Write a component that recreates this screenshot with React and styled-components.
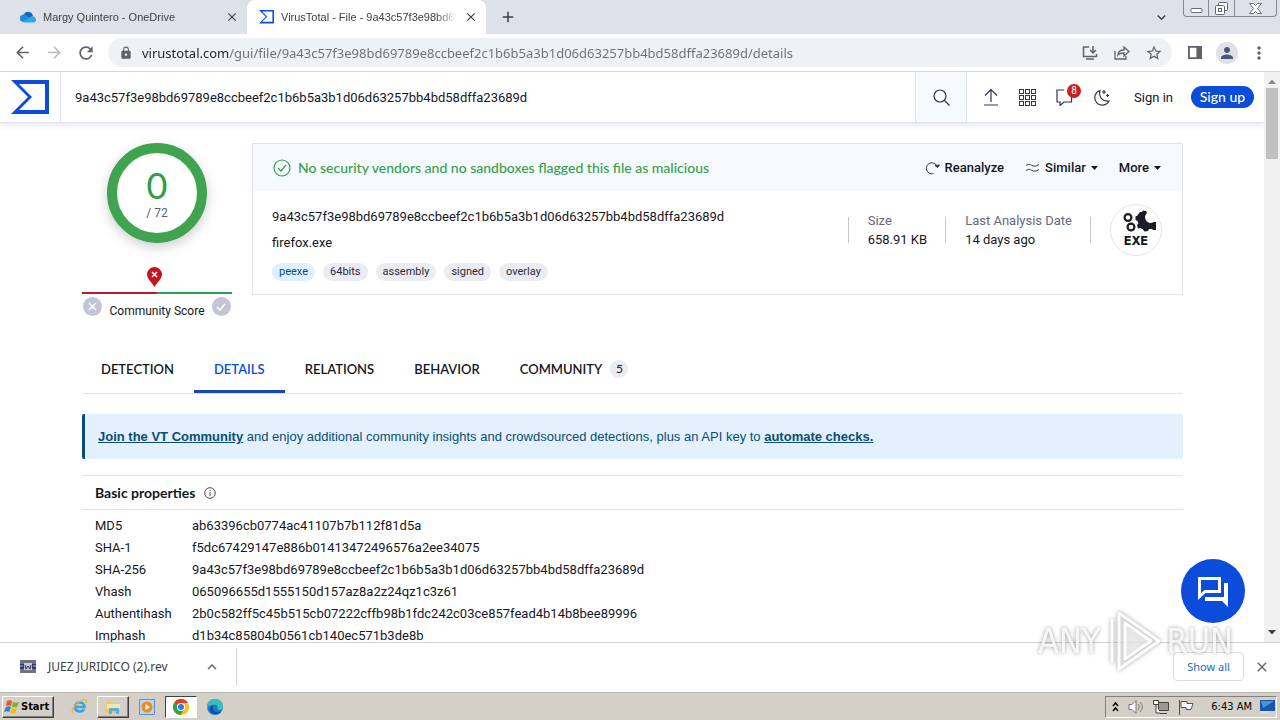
import styled, { createGlobalStyle, css } from "styled-components";
import { MdLock, MdStarOutline, MdPerson, MdMoreVert, MdRefresh, MdArrowBack, MdArrowForward, MdAdd, MdClose, MdExpandMore, MdExpandLess } from "react-icons/md";

const GlobalStyle = createGlobalStyle`
* { box-sizing: border-box; }
body {
margin: 0;
font-family: Roboto, "Liberation Sans", sans-serif;
font-size: 13px;
color: #15171f;
background: #fff;
}
button, input {
font: inherit;
color: inherit;
border: 0;
padding: 0;
margin: 0;
background: none;
}
button { cursor: pointer; }
svg { display: block; flex: none; }
`

const Desktop = styled.div`
display: flex;
flex-direction: column;
height: 100vh;
overflow: hidden;
`

/* browser window */
const TabStrip = styled.div`
display: flex;
flex: none;
height: 34px;
padding-left: 8px;
background: #dee1e9;
font-family: "Liberation Sans", sans-serif;
font-size: 11px;
color: #3c4043;
`
const Tab = styled.div`
display: flex;
align-items: center;
gap: 7px;
width: 239px;
padding: 0 8px 0 12px;
border-radius: 8px 8px 0 0;
background: ${props => props.$active ? "#fff" : "transparent"};
`
const TabTitle = styled.span`
flex: 1;
overflow: hidden;
white-space: nowrap;
mask-image: linear-gradient(to right, #000 88%, transparent);
`
const IconButton = styled.button`
display: flex;
align-items: center;
justify-content: center;
width: ${props => props.$w || 20}px;
color: ${props => props.$color || "#5f6368"};
`
const Spacer = styled.div`
flex: 1;
`
const WindowButtons = styled.div`
display: flex;
width: 94px;
height: 17px;
margin: 0 3px 0 12px;
border: 1px solid #85888f;
border-top: 0;
border-radius: 0 0 4px 4px;
`
const WindowButton = styled.button`
display: flex;
align-items: center;
justify-content: center;
flex: ${props => props.$grow || 1};
& + & { border-left: 1px solid #85888f; }
`
const Toolbar = styled.div`
display: flex;
align-items: center;
flex: none;
height: 38px;
padding: 0 10px 0 6px;
border-bottom: 1px solid #d5d7da;
`
const Address = styled.div`
display: flex;
align-items: center;
flex: 1;
height: 29px;
margin: 0 12px 0 6px;
padding: 0 2px 0 11px;
border-radius: 15px;
background: #eff2f5;
`
const AddressInput = styled.input`
flex: 1;
min-width: 0;
margin-left: 9px;
font-family: "Noto Sans", sans-serif;
font-size: 13px;
outline: 0;
color: transparent;
background: linear-gradient(to right, #202124 87px, #6b6f74 87px);
background-clip: text;
`
const Avatar = styled.button`
display: flex;
align-items: center;
justify-content: center;
width: 22px;
height: 22px;
margin: 0 10px;
border-radius: 50%;
background: #dfe1e5;
color: #4a5878;
`

/* page */
const Viewport = styled.div`
display: flex;
flex: 1;
min-height: 0;
`
const Page = styled.div`
flex: 1;
min-width: 0;
overflow: hidden;
`
const ScrollTrack = styled.div`
display: flex;
flex-direction: column;
align-items: center;
width: 16px;
padding: 7px 0;
background: #f1f1f1;
`
const ScrollThumb = styled.div`
flex: none;
width: 12px;
height: 71px;
margin-top: 4px;
background: #c1c1c1;
`
const Header = styled.header`
display: flex;
align-items: center;
height: 51px;
padding-right: 10px;
border-bottom: 1px solid #e3e5ec;
box-shadow: 0 2px 6px rgba(30, 40, 80, .12);
`
const Logo = styled.a`
display: flex;
align-items: center;
height: 50px;
width: 61px;
padding-left: 11px;
border-right: 1px solid #dfe3ee;
`
const SearchInput = styled.input`
flex: 1;
min-width: 0;
height: 50px;
padding-left: 14px;
outline: 0;
`
const SearchButton = styled.button`
display: flex;
align-items: center;
justify-content: center;
width: 52px;
height: 50px;
margin-right: 5px;
border: solid #dfe3ee;
border-width: 0 1px;
background: #f7faff;
`
const NavButton = styled.button`
display: flex;
align-items: center;
justify-content: center;
position: relative;
width: 37px;
height: 36px;
`
const Count = styled.span`
position: absolute;
top: 5px;
right: 2px;
width: 14px;
height: 14px;
border-radius: 50%;
background: #c8201f;
color: #fff;
font-size: 10px;
line-height: 14px;
text-align: center;
`
const SignIn = styled.a`
margin: 0 18px 0 14px;
color: inherit;
text-decoration: none;
`
const SignUp = styled.a`
width: 63px;
height: 22px;
border-radius: 11px;
background: #0b4dda;
color: #fff;
font-family: Lato, sans-serif;
font-size: 14px;
font-weight: 500;
line-height: 22px;
text-align: center;
text-decoration: none;
`
const Content = styled.main`
padding: 20px 81px 0 82px;
`
const Summary = styled.section`
display: flex;
gap: 20px;
`
const Score = styled.div`
display: flex;
flex-direction: column;
align-items: center;
width: 150px;
`
const Ring = styled.div`
display: flex;
flex-direction: column;
align-items: center;
width: 100px;
height: 100px;
padding-top: 12px;
border: 10px solid #3fa350;
border-radius: 50%;
box-shadow: 0 4px 12px rgba(60, 60, 80, .25), inset 0 1px 3px rgba(60, 60, 80, .1);
color: #5a5d75;
font-size: 12px;
line-height: 16px;
`
const Detected = styled.span`
color: #2f9e44;
font-family: Lato, sans-serif;
font-size: 36px;
line-height: 40px;
`
const Pin = styled.div`
margin: 24px 6px 4px 0;
`
const ScoreBar = styled.div`
width: 100%;
height: 2px;
background: linear-gradient(to right, #b91c2c 50%, #2fa052 50%);
`
const Votes = styled.div`
display: flex;
justify-content: space-between;
width: 100%;
padding: 3px 1px 0 1px;
font-size: 12px;
line-height: 28px;
`
const Vote = styled.button`
display: flex;
align-items: center;
justify-content: center;
width: 19px;
height: 19px;
border-radius: 50%;
background: #c3c4d4;
color: #fff;
`
const Card = styled.div`
flex: 1;
height: 152px;
border: 1px solid #e0e3e8;
`
const CardHeader = styled.div`
display: flex;
align-items: center;
height: 47px;
padding: 0 21px 0 20px;
background: #f6faff;
`
const Verdict = styled.div`
display: flex;
flex: 1;
align-items: center;
gap: 7px;
color: #34a04c;
font-family: Lato, sans-serif;
font-size: 14px;
font-weight: 500;
`
const CardAction = styled.button`
display: flex;
align-items: center;
gap: 5px;
margin-left: 21px;
font-weight: 500;
`
const CardBody = styled.div`
display: flex;
padding: 13px 20px 0 19px;
`
const FileInfo = styled.div`
flex: 1;
line-height: 26px;
`
const Tags = styled.div`
display: flex;
gap: 8px;
margin-top: 7px;
`
const Tag = styled.a`
height: 18px;
padding: 0 7px;
border-radius: 9px;
background: ${props => props.$blue ? "#def1ff" : "#ebebf2"};
color: ${props => props.$blue ? "#0b4d75" : "#2b2c3d"};
font-size: 11px;
line-height: 17px;
text-decoration: none;
`
const Fact = styled.div`
height: 26px;
margin-top: 13px;
padding: 0 18px 0 19px;
border-left: 1px solid #c4c7ce;
line-height: 19px;
white-space: nowrap;
`
const FactEnd = styled.div`
width: 20px;
height: 26px;
margin-top: 13px;
border-left: 1px solid #c4c7ce;
`
const FactLabel = styled.div`
margin-top: -6px;
color: #63687f;
`
const FileType = styled.div`
display: flex;
flex-direction: column;
align-items: center;
width: 52px;
height: 52px;
padding-top: 5px;
border: 1px solid #e4e4ee;
border-radius: 50%;
font-family: Inter, sans-serif;
font-size: 12px;
font-weight: 800;
line-height: 14px;
`
const Tabs = styled.nav`
display: flex;
height: 46px;
margin-top: 23px;
border-bottom: 1px solid #e0e3e8;
font-family: Lato, sans-serif;
`
const NavTab = styled.a`
display: flex;
align-items: center;
gap: 8px;
height: 45px;
padding: 0 20px;
border-bottom: 3px solid transparent;
color: inherit;
font-weight: 600;
text-decoration: none;
&:first-child { padding-left: 19px; }
${props => props.$active && css`
color: #0b4dda;
border-bottom-color: #1845c4;
`}
`
const TabCount = styled.span`
width: 18px;
height: 18px;
border-radius: 50%;
background: #ebebf2;
font-size: 12px;
font-weight: 400;
line-height: 18px;
text-align: center;
`
const Banner = styled.p`
margin: 20px 0 16px;
padding: 0 13px;
border-left: 3px solid #0b4d75;
border-radius: 2px;
background: #e2f1fd;
color: #0b4d75;
font-family: "Liberation Sans", sans-serif;
line-height: 45px;
a {
color: inherit;
font-weight: 700;
}
`
const SectionTitle = styled.h2`
display: flex;
align-items: center;
gap: 9px;
height: 35px;
margin: 0 0 5px;
padding-left: 13px;
border: solid #e2e4e8;
border-width: 1px 0;
font-family: Lato, sans-serif;
font-size: 14px;
font-weight: 700;
`
const Properties = styled.table`
border-collapse: collapse;
line-height: 22px;
th {
width: 110px;
padding: 0 0 0 13px;
font-weight: 400;
text-align: left;
}
td { padding: 0; }
`
const ChatButton = styled.button`
position: fixed;
right: 35px;
bottom: 97px;
display: flex;
align-items: center;
justify-content: center;
width: 64px;
height: 64px;
border-radius: 50%;
background: #0b4dda;
color: #fff;
`
const Watermark = styled.div`
position: fixed;
right: 47px;
bottom: 48px;
display: flex;
align-items: center;
gap: 5px;
color: rgba(255, 255, 255, .85);
font-family: "DejaVu Sans Condensed", "DejaVu Sans", sans-serif;
font-size: 34px;
text-shadow: 0 0 4px rgba(90, 90, 90, .6);
pointer-events: none;
svg { filter: drop-shadow(0 0 2px rgba(90, 90, 90, .6)); }
`

/* downloads and taskbar */
const Downloads = styled.div`
display: flex;
align-items: center;
flex: none;
height: 50px;
padding: 0 8px 2px 20px;
border-top: 1px solid #cfd1d4;
background: #fff;
color: #3c4043;
font-family: "Noto Sans", sans-serif;
font-size: 12px;
`
const Download = styled.div`
display: flex;
align-items: center;
width: 217px;
height: 38px;
border-right: 1px solid #d0d2d6;
`
const FileName = styled.span`
flex: 1;
margin-left: 12px;
`
const ShowAll = styled.button`
width: 71px;
height: 29px;
margin-right: 8px;
border: 1px solid #dadce0;
border-radius: 4px;
color: #1a67d2;
font-size: 11px;
`
const Taskbar = styled.div`
display: flex;
align-items: center;
flex: none;
height: 28px;
padding: 0 3px 0 2px;
border-top: 1px solid #b9b6af;
background: #d4d0c8;
color: #000;
font-family: "DejaVu Sans Condensed", "DejaVu Sans", sans-serif;
font-size: 11px;
`
const StartButton = styled.button`
display: flex;
align-items: center;
gap: 1px;
width: 52px;
height: 22px;
margin-right: 9px;
padding-left: 1px;
border: 1px solid;
border-color: #fff #404040 #404040 #fff;
box-shadow: inset -1px -1px #808080;
font-weight: 700;
`
const TaskButton = styled.button`
display: flex;
align-items: center;
justify-content: center;
width: 32px;
height: 22px;
margin-right: 2px;
border: 1px solid transparent;
${props => props.$open && css`
border-color: #fff #404040 #404040 #fff;
box-shadow: inset -1px -1px #808080;
`}
${props => props.$pressed && css`
background: #fff;
border-color: #404040 #fff #fff #404040;
`}
`
const Tray = styled.div`
display: flex;
align-items: center;
gap: 8px;
width: 172px;
height: 22px;
padding: 0 1px 0 5px;
border: 1px solid;
border-color: #808080 #fff #fff #808080;
`
const Clock = styled.time`
flex: 1;
text-align: right;
white-space: nowrap;
`

const VtMark = ({ size }) => (
    <svg width={size} height={size * 34 / 38} viewBox="0 0 38 34" fill="#0b4dda">
        <path fillRule="evenodd" d="M0 0h38v34H0l17-17zM8 4l13 13L8 30h26V4z" />
    </svg>
)

const Cloud = () => (
    <svg width="16" height="12" viewBox="0 0 16 12">
        <path d="M4 3a5 5 0 0 1 9 2L8 9 2 8z" fill="#1467b8" />
        <path d="M1 10a3.500 3.500 0 0 1 1-6c2-1 4 0 5 1l6 5-2 1H3z" fill="#1c8edb" />
        <path d="M3 11 10 6c3-2 6 0 6 3 0 2-2 2.500-3 2.500H4z" fill="#2ca9ea" />
    </svg>
)

const Caret = () => (
    <svg width="7" height="4" viewBox="0 0 7 4"><path d="M0 0h7L3.500 4z" fill="currentColor" /></svg>
)

const ScrollArrow = ({ down }) => (
    <svg width="8" height="5" viewBox="0 0 8 5"><path d={down ? "M0 0h8L4 4.500z" : "M0 5h8L4 .5z"} fill={down ? "#404040" : "#8a8a8a"} /></svg>
)

const properties = [
    ["MD5", "ab63396cb0774ac41107b7b112f81d5a"],
    ["SHA-1", "f5dc67429147e886b01413472496576a2ee34075"],
    ["SHA-256", "9a43c57f3e98bd69789e8ccbeef2c1b6b5a3b1d06d63257bb4bd58dffa23689d"],
    ["Vhash", "065096655d1555150d157az8a2z24qz1c3z61"],
    ["Authentihash", "2b0c582ff5c45b515cb07222cffb98b1fdc242c03ce857fead4b14b8bee89996"],
    ["Imphash", "d1b34c85804b0561cb140ec571b3de8b"],
]
const fileHash = properties[2][1];

const BrowserChrome = () => (
    <>
        <TabStrip>
            <Tab>
                <Cloud />
                <TabTitle>Margy Quintero - OneDrive</TabTitle>
                <IconButton $w={14} $color="#3c4043" aria-label="Close tab"><MdClose size={14} /></IconButton>
            </Tab>
            <Tab $active>
                <VtMark size={15} />
                <TabTitle>VirusTotal - File - 9a43c57f3e98bd69</TabTitle>
                <IconButton $w={14} $color="#3c4043" aria-label="Close tab"><MdClose size={14} /></IconButton>
            </Tab>
            <IconButton $w={44} $color="#3c4043" aria-label="New tab"><MdAdd size={18} /></IconButton>
            <Spacer />
            <IconButton $color="#3c4043" aria-label="Search tabs"><MdExpandMore size={17} /></IconButton>
            <WindowButtons>
                <WindowButton aria-label="Minimize">
                    <svg width="13" height="12" viewBox="0 0 13 12"><rect x="1" y="6.500" width="11" height="4" rx="1" fill="#fff" stroke="#6b6e75" /></svg>
                </WindowButton>
                <WindowButton aria-label="Restore">
                    <svg width="13" height="13" viewBox="0 0 13 13" fill="#fff" stroke="#5f6269"><rect x="3.500" y=".5" width="9" height="8" rx="1" /><rect x=".5" y="3.500" width="9" height="9" rx="1" /><rect x="3.500" y="6.500" width="3" height="3" /></svg>
                </WindowButton>
                <WindowButton $grow={1.700} aria-label="Close">
                    <svg width="13" height="11" viewBox="0 0 13 11"><path d="M.5.5h4l2 2 2-2h4L8.500 5.500l4 5h-4l-2-2-2 2h-4l4-5z" fill="#fff" stroke="#6b6e75" /></svg>
                </WindowButton>
            </WindowButtons>
        </TabStrip>
        <Toolbar>
            <IconButton $w={32} aria-label="Back"><MdArrowBack size={19} /></IconButton>
            <IconButton $w={32} $color="#babcbe" aria-label="Forward"><MdArrowForward size={19} /></IconButton>
            <IconButton $w={32} aria-label="Reload"><MdRefresh size={20} /></IconButton>
            <Address>
                <MdLock size={14} color="#5f6368" />
                <AddressInput aria-label="Address" defaultValue={`virustotal.com/gui/file/${fileHash}/details`} />
                <IconButton $w={32} aria-label="Install">
                    <svg width="16" height="14" viewBox="0 0 16 14" fill="none" stroke="currentColor" strokeWidth="1.500"><path d="M7 1H1.500v9.500h13V8M4 13h8M11 0v7M8 4l3 3 3-3" /></svg>
                </IconButton>
                <IconButton $w={32} aria-label="Share">
                    <svg width="16" height="14" viewBox="0 0 16 14" fill="none" stroke="currentColor" strokeWidth="1.300"><path d="M1 5v8h11v-3M4 9c0-4 3-5 6-5V1l5 4.500L10 10V7C7 7 5 7.500 4 9z" /></svg>
                </IconButton>
                <IconButton $w={32} aria-label="Bookmark"><MdStarOutline size={18} /></IconButton>
            </Address>
            <IconButton $w={22} aria-label="Side panel">
                <svg width="14" height="13" viewBox="0 0 15 14"><path d="M1 1h13v12H1z" fill="none" stroke="currentColor" strokeWidth="2" /><path d="M9 0h6v14H9z" fill="currentColor" /></svg>
            </IconButton>
            <Avatar aria-label="Profile"><MdPerson size={18} /></Avatar>
            <IconButton $w={22} aria-label="Menu"><MdMoreVert size={20} /></IconButton>
        </Toolbar>
    </>
)

const VtHeader = () => (
    <Header>
        <Logo href="#" aria-label="VirusTotal"><VtMark size={38} /></Logo>
        <SearchInput aria-label="Search" defaultValue={fileHash} />
        <SearchButton aria-label="Search">
            <svg width="17" height="17" viewBox="0 0 17 17" fill="none" stroke="#33364a" strokeWidth="1.200"><circle cx="7" cy="7" r="6" /><path d="m11.500 11.500 5 5" /></svg>
        </SearchButton>
        <NavButton aria-label="Upload">
            <svg width="16" height="18" viewBox="0 0 16 18" fill="none" stroke="#33364a" strokeWidth="1.200"><path d="M8 14V1.500M2 7.500l6-6 6 6M1 17h14" /></svg>
        </NavButton>
        <NavButton aria-label="Apps">
            <svg width="17" height="17" viewBox="0 0 17 17" fill="none" stroke="#33364a">
                {[0, 1, 2].map(r => [0, 1, 2].map(c => <rect key={`${r}${c}`} x={c * 6 + .5} y={r * 6 + .5} width="4" height="4" />))}
            </svg>
        </NavButton>
        <NavButton aria-label="Notifications">
            <svg width="17" height="17" viewBox="0 0 17 17" fill="none" stroke="#33364a" strokeWidth="1.200"><path d="M8 1H1v12h3v3.500L8 13h7.500V8" /></svg>
            <Count>8</Count>
        </NavButton>
        <NavButton aria-label="Dark mode">
            <svg width="17" height="17" viewBox="0 0 17 17" fill="none" stroke="#33364a" strokeWidth="1.200"><path d="M7 1.500A7.500 7.500 0 1 0 16 12C10 13 5 8 7 1.500z" /><path d="M11 1v4M9 3h4M14.500 5v3M13 6.500h3" /></svg>
        </NavButton>
        <SignIn href="#">Sign in</SignIn>
        <SignUp href="#">Sign up</SignUp>
    </Header>
)

const FileSummary = () => (
    <Summary>
        <Score>
            <Ring><Detected>0</Detected>/ 72</Ring>
            <Pin>
                <svg width="15" height="21" viewBox="0 0 15 21"><path d="M7.500 0a7.500 7.500 0 0 1 7.500 7.500c0 4-4 7-7.500 12.500C4 14.500 0 11.500 0 7.500A7.500 7.500 0 0 1 7.500 0z" fill="#c4161c" /><path d="m5 5 5 5m0-5-5 5" stroke="#fff" strokeWidth="1.500" /></svg>
            </Pin>
            <ScoreBar />
            <Votes>
                <Vote aria-label="Vote malicious"><svg width="9" height="9" viewBox="0 0 9 9" stroke="#fff" strokeWidth="1.500"><path d="m1 1 7 7m0-7L1 8" /></svg></Vote>
                Community Score
                <Vote aria-label="Vote harmless"><svg width="10" height="8" viewBox="0 0 10 8" fill="none" stroke="#fff" strokeWidth="1.500"><path d="m1 4 3 3 5-6" /></svg></Vote>
            </Votes>
        </Score>
        <Card>
            <CardHeader>
                <Verdict>
                    <svg width="18" height="18" viewBox="0 0 18 18" fill="none" stroke="currentColor" strokeWidth="1.200"><circle cx="9" cy="9" r="8" /><path d="m5 9 3 3 5-6" /></svg>
                    No security vendors and no sandboxes flagged this file as malicious
                </Verdict>
                <CardAction>
                    <svg width="15" height="14" viewBox="0 0 15 14" fill="none" stroke="#33364a"><path d="M8.500 12.500a5.500 5.500 0 1 1 3.500-7" /><path d="m10 4.500 2.500 2L14.500 4z" fill="#33364a" /></svg>
                    Reanalyze
                </CardAction>
                <CardAction>
                    <svg width="15" height="9" viewBox="0 0 15 9" fill="none" stroke="#33364a"><path d="M1 2.500c3-2 4-1 6 0s4 1 7-1M1 7.500c3-2 4-1 6 0s4 1 7-1" /></svg>
                    Similar <Caret />
                </CardAction>
                <CardAction>More <Caret /></CardAction>
            </CardHeader>
            <CardBody>
                <FileInfo>
                    <div>{fileHash}</div>
                    <div>firefox.exe</div>
                    <Tags>
                        <Tag href="#" $blue>peexe</Tag>
                        <Tag href="#">64bits</Tag>
                        <Tag href="#">assembly</Tag>
                        <Tag href="#">signed</Tag>
                        <Tag href="#">overlay</Tag>
                    </Tags>
                </FileInfo>
                <Fact><FactLabel>Size</FactLabel>658.91 KB</Fact>
                <Fact><FactLabel>Last Analysis Date</FactLabel>14 days ago</Fact>
                <FactEnd />
                <FileType>
                    <svg width="40" height="24" viewBox="-4 0 40 24">
                        <g fill="none" stroke="#1b1c26" strokeWidth="2.200"><circle cx="8" cy="7.500" r="3.400" /><circle cx="11" cy="17" r="3.400" /></g>
                        <path d="M20 2l2 0 1-1.500 3 .5 1 2c-2.500 2.500-2.500 6 0 8.500 2.500 2 4.500 2 6.500.500h2.500v8h-3l-1-1-3 0-1 2-3.500.500-1.500-2-2.500-1.500-2.500.500-1-3.500 1.500-1.500-1-2.500-2-1 0-3.500 2-1 .5-1z" fill="#1b1c26" />
                    </svg>
                    EXE
                </FileType>
            </CardBody>
        </Card>
    </Summary>
)

const DownloadBar = () => (
    <Downloads>
        <Download>
            <svg width="16" height="15" viewBox="0 0 16 15"><path d="M0 1h16v4H0z" fill="#6d7185" /><path d="M0 5h16v5H0z" fill="#2f3b78" /><path d="M0 10h16v4H0z" fill="#75776f" /><path d="M4 4h8v7H4z" fill="#c9cbd2" /><path d="m5 6 1 4 2-3 2 3 1-4" fill="none" stroke="#222b52" /><path d="M0 7h3M13 7h3" stroke="#aeb6d8" /></svg>
            <FileName>JUEZ JURIDICO (2).rev</FileName>
            <IconButton $w={48} aria-label="Options"><MdExpandLess size={18} /></IconButton>
        </Download>
        <Spacer />
        <ShowAll>Show all</ShowAll>
        <IconButton aria-label="Close"><MdClose size={16} /></IconButton>
    </Downloads>
)

const WindowsTaskbar = () => (
    <Taskbar>
        <StartButton>
            <svg width="16" height="16" viewBox="0 0 16 16"><path d="M3 2c2-1 4-1 5 0L7 7c-2-1-3-1-5 0z" fill="#e8562a" /><path d="M9 3c2 1 4 1 6 0l-2 5c-2 1-3 0-5 0z" fill="#7bb32e" /><path d="M2 8c2-1 3-1 5 0l-2 5c-1-1-3-1-5 0z" fill="#2f7fd6" /><path d="M8 9c2 1 3 1 5 0l-2 5c-2 1-4 1-5 0z" fill="#f6b71b" /></svg>
            Start
        </StartButton>
        <TaskButton aria-label="Internet Explorer">
            <svg width="17" height="17" viewBox="0 0 17 17" fill="none"><path d="M4 9h9.500c0-6-9.500-6-9.500 0 0 5 7 6 9 2" stroke="#34a3e0" strokeWidth="2.600" /><path d="M2 15c-3-3 4-11 10-13 4-1 4 1 3 3" stroke="#e9b43a" strokeWidth="1.200" /></svg>
        </TaskButton>
        <TaskButton $open aria-label="Explorer">
            <svg width="17" height="16" viewBox="0 0 17 16"><path d="M1 2h6l1 2h7v10H1z" fill="#eacb6b" /><path d="M2 5h13v5H2z" fill="#f7e8a8" /><path d="M4 15V9h10v6h-3v-3H7v3z" fill="#58aee0" /></svg>
        </TaskButton>
        <TaskButton aria-label="Media Player">
            <svg width="16" height="16" viewBox="0 0 16 16"><path d="M.5.500h15v15H.5z" fill="#b9d4ec" stroke="#5d92c4" /><circle cx="8" cy="8" r="5.500" fill="#f08a1c" /><path d="m6.500 5 4.500 3-4.500 3z" fill="#fff" /></svg>
        </TaskButton>
        <TaskButton $pressed aria-label="Chrome">
            <svg width="16" height="16" viewBox="0 0 16 16"><circle cx="8" cy="8" r="8" fill="#fbc116" /><path d="M8 8 1 4a8 8 0 0 1 14 0H8z" fill="#e33b2e" /><path d="M8 8 1 4a8 8 0 0 0 6.500 12L11 10z" fill="#2da24c" /><circle cx="8" cy="8" r="4" fill="#fff" /><circle cx="8" cy="8" r="3" fill="#3279e8" /></svg>
        </TaskButton>
        <TaskButton aria-label="Edge">
            <svg width="16" height="16" viewBox="0 0 16 16"><circle cx="8" cy="8" r="8" fill="#1479c9" /><path d="M0 8a8 8 0 0 1 16 0c0 3-4 4-6 2 2-3-1-5-4-4-3 0-5 1-6 3z" fill="#36c0b8" /><path d="M6 8c-1 4 3 6 8 5-4 4-11 2-11-3 0-2 1-3 3-4z" fill="#0c4f9e" /></svg>
        </TaskButton>
        <Spacer />
        <Tray>
            <svg width="9" height="12" viewBox="0 0 9 12" fill="none" stroke="#000" strokeWidth="1.500"><path d="m2 5 2.500-3L7 5M2 10l2.500-3L7 10" /></svg>
            <svg width="17" height="16" viewBox="0 0 17 16" fill="none" stroke="#77756f"><path d="M1 5.500h3l4-4v13l-4-4H1z" fill="#fff" /><path d="M10 5c1.500 2 1.500 4 0 6M12 3c3 3 3 7 0 10" /></svg>
            <svg width="17" height="16" viewBox="0 0 17 16" fill="#fff" stroke="#45443f"><path d="M5.500 3.500h10v8h-10z" fill="#9b9992" /><path d="M7 14.500h7M.5 1.500h5v4h-5zM3 6v8h4" /></svg>
            <svg width="17" height="16" viewBox="0 0 17 16" fill="#fff" stroke="#55534e"><path d="M3 2.500h6v2h6l-2 6H8v-2H3zM1.500 1v15" /></svg>
            <Clock>6:43 AM</Clock>
            <svg width="15" height="13" viewBox="0 0 15 13"><path d="M0 0h15v11H0z" fill="#1d56a8" /><path d="M1 1h13L3 8z" fill="#4e92dc" /><path d="M1 12h8" stroke="#dfe8f3" /></svg>
        </Tray>
    </Taskbar>
)

const App = () => {
    return (
        <Desktop>
            <GlobalStyle />
            <BrowserChrome />
            <Viewport>
                <Page>
                    <VtHeader />
                    <Content>
                        <FileSummary />
                        <Tabs>
                            <NavTab href="#">DETECTION</NavTab>
                            <NavTab href="#" $active>DETAILS</NavTab>
                            <NavTab href="#">RELATIONS</NavTab>
                            <NavTab href="#">BEHAVIOR</NavTab>
                            <NavTab href="#">COMMUNITY <TabCount>5</TabCount></NavTab>
                        </Tabs>
                        <Banner>
                            <a href="#">Join the VT Community</a> and enjoy additional community insights and crowdsourced detections, plus an API key to <a href="#">automate checks.</a>
                        </Banner>
                        <SectionTitle>
                            Basic properties
                            <svg width="12" height="12" viewBox="0 0 12 12" fill="none" stroke="#4a4d5c"><circle cx="6" cy="6" r="5.300" /><path d="M6 5v4M6 3v1" /></svg>
                        </SectionTitle>
                        <Properties>
                            <tbody>
                                {properties.map(([name, value]) => (
                                    <tr key={name}><th scope="row">{name}</th><td>{value}</td></tr>
                                ))}
                            </tbody>
                        </Properties>
                    </Content>
                </Page>
                <ScrollTrack>
                    <ScrollArrow />
                    <ScrollThumb />
                    <Spacer />
                    <ScrollArrow down />
                </ScrollTrack>
            </Viewport>
            <DownloadBar />
            <WindowsTaskbar />
            <ChatButton aria-label="Chat">
                <svg width="32" height="31" viewBox="0 0 32 31"><path d="M2.500 2.500h20v13H8l-5.500 5z" fill="none" stroke="#fff" strokeWidth="3" /><path d="M27 7h4v24l-6-6H8v-4h19z" fill="#fff" /></svg>
            </ChatButton>
            <Watermark>
                ANY
                <svg width="56" height="62" viewBox="0 0 56 62" fill="rgba(255,255,255,.4)" stroke="rgba(255,255,255,.95)" strokeWidth="3" strokeLinejoin="round"><path d="M14 3v56l40-28z" /><path d="M20 13v36l26-18z" /><path d="M7 9v44" /></svg>
                RUN
            </Watermark>
        </Desktop>
    )
}
export default App
